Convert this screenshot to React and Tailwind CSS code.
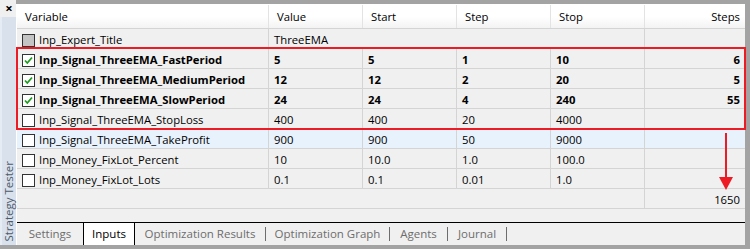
import React from 'react';

const rows = [
  { name: 'Inp_Expert_Title', value: 'ThreeEMA', text: true, box: 'disabled' },
  { name: 'Inp_Signal_ThreeEMA_FastPeriod', value: '5', start: '5', step: '1', stop: '10', steps: '6', box: 'on' },
  { name: 'Inp_Signal_ThreeEMA_MediumPeriod', value: '12', start: '12', step: '2', stop: '20', steps: '5', box: 'on' },
  { name: 'Inp_Signal_ThreeEMA_SlowPeriod', value: '24', start: '24', step: '4', stop: '240', steps: '55', box: 'on' },
  { name: 'Inp_Signal_ThreeEMA_StopLoss', value: '400', start: '400', step: '20', stop: '4000', steps: '', box: 'off' },
  { name: 'Inp_Signal_ThreeEMA_TakeProfit', value: '900', start: '900', step: '50', stop: '9000', steps: '', box: 'off', hover: true },
  { name: 'Inp_Money_FixLot_Percent', value: '10', start: '10.0', step: '1.0', stop: '100.0', steps: '', box: 'off' },
  { name: 'Inp_Money_FixLot_Lots', value: '0.1', start: '0.1', step: '0.01', stop: '1.0', steps: '', box: 'off' },
];

const cols = 'grid grid-cols-[252px_94px_94px_94px_94px_1fr]';

const CheckBox = ({ state }) => (
  <span
    className={`w-[13px] h-[13px] border border-[#333333] flex items-center justify-center shrink-0 ${
      state === 'disabled' ? 'bg-[#c4c4c4]' : 'bg-white'
    }`}
  >
    {state === 'on' && (
      <svg width="11" height="11" viewBox="0 0 11 11">
        <path d="M2 5.5 L4.3 8 L9 2.5" fill="none" stroke="#1e9e1e" strokeWidth="1.8" />
      </svg>
    )}
  </span>
);

const Cell = ({ children, bold, right, last }) => (
  <div
    className={`h-full flex items-center pt-[3px] ${right ? 'justify-end pr-[5px]' : 'pl-[5px]'} ${
      last ? '' : 'border-r border-[#d4d4d4]'
    } ${bold ? 'font-bold' : ''}`}
  >
    {children}
  </div>
);

const Row = ({ r }) => {
  const bold = r.box === 'on';
  return (
    <div className={`${cols} h-[20px] border-b border-[#d4d4d4] ${r.hover ? 'bg-[#e8f2fc]' : ''}`}>
      <div className={`h-full flex items-center gap-[4px] pl-[5px] pt-[3px] border-r border-[#d4d4d4] ${bold ? 'font-bold' : ''}`}>
        <CheckBox state={r.box} />
        <span>{r.name}</span>
      </div>
      {r.text ? (
        <div className="col-span-4 h-full flex items-center pl-[5px] pt-[3px] border-r border-[#d4d4d4]">{r.value}</div>
      ) : (
        <>
          <Cell bold={bold}>{r.value}</Cell>
          <Cell bold={bold}>{r.start}</Cell>
          <Cell bold={bold}>{r.step}</Cell>
          <Cell bold={bold}>{r.stop}</Cell>
        </>
      )}
      <Cell bold={bold} right last>{r.steps}</Cell>
    </div>
  );
};

const tabs = [
  { label: 'Settings', w: 'w-[66px]' },
  { label: 'Inputs', w: 'w-[52px]', active: true },
  { label: 'Optimization Results', w: 'w-[130px]', sep: true },
  { label: 'Optimization Graph', w: 'w-[123px]', sep: true },
  { label: 'Agents', w: 'w-[57px]', sep: true },
  { label: 'Journal', w: 'w-[58px]', sep: true },
];

export default function App() {
  return (
    <div
      className="relative w-[750px] h-[249px] bg-[#f0f0f0] flex flex-col text-[11.3px] text-black overflow-hidden"
      style={{ fontFamily: '"Open Sans", "Noto Sans", sans-serif' }}
    >
      <div className="flex flex-1 min-h-0">
        {/* side panel */}
        <div className="w-[16px] flex flex-col shrink-0">
          <div className="h-[17px] flex items-center justify-center text-[13px] font-bold leading-none pl-[2px]">×</div>
          <div className="flex-1 bg-[#d9e1ec] border-l-2 border-[#e6ecf4] flex flex-col justify-end items-center pb-[3px]">
            <span className="[writing-mode:vertical-rl] rotate-180 text-[11.5px] text-[#4d5a6b] leading-none">Strategy Tester</span>
          </div>
        </div>

        {/* main */}
        <div className="flex-1 flex flex-col border-t-4 border-r-[5px] border-[#a3a3a3] min-w-0">
          <div className="flex-1 flex flex-col border-l border-t border-white">
            {/* header */}
            <div className={`${cols} h-[24px] border-b border-[#d4d4d4] bg-gradient-to-b from-white via-white to-[#f3f3f3]`}>
              {['Variable', 'Value', 'Start', 'Step', 'Stop'].map((h) => (
                <div key={h} className="h-full flex items-center pl-[8px] pt-[2px] border-r border-[#e3e3e3]">{h}</div>
              ))}
              <div className="h-full flex items-center justify-end pr-[5px] pt-[2px]">Steps</div>
            </div>

            {rows.map((r) => (
              <Row key={r.name} r={r} />
            ))}

            {/* total */}
            <div className={`${cols} h-[20px] border-b border-[#d4d4d4]`}>
              <div className="col-span-5 border-r border-[#d4d4d4]" />
              <div className="h-full flex items-center justify-end pr-[5px] pt-[3px]">1650</div>
            </div>

            <div className="flex-1" />

            {/* tabs */}
            <div className="h-[23px] border-t border-black flex items-stretch text-[11.5px] text-[#6d6d6d]">
              {tabs.map((t) => (
                <React.Fragment key={t.label}>
                  <div
                    className={`${t.w} flex items-center justify-center ${
                      t.active ? 'bg-white text-black border-x border-black' : ''
                    }`}
                  >
                    {t.label}
                  </div>
                  {t.sep && (
                    <div className="flex items-center">
                      <span className="w-px h-[14px] bg-[#6d6d6d]" />
                    </div>
                  )}
                </React.Fragment>
              ))}
            </div>
          </div>
        </div>
      </div>
      <div className="h-[4px] bg-[#a3a3a3] shrink-0" />

      {/* annotation: red box */}
      <div className="absolute left-[16px] top-[47px] w-[730px] h-[83px] border-2 border-[#ed1c24] pointer-events-none" />
      {/* annotation: arrow */}
      <svg className="absolute left-[716px] top-[132px]" width="20" height="60" viewBox="0 0 20 60">
        <line x1="10" y1="1" x2="10" y2="46" stroke="#ed1c24" strokeWidth="2" />
        <polygon points="3,45 17,45 10,58" fill="#ed1c24" />
      </svg>
    </div>
  );
}
